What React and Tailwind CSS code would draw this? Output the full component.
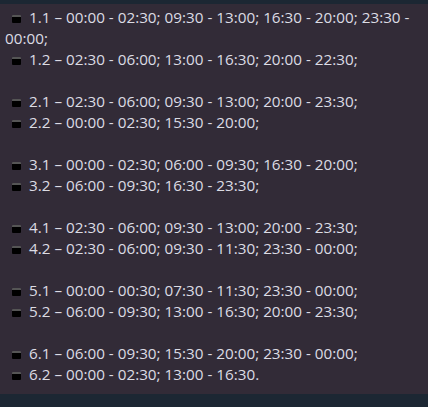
const groups = [
  ['1.1 – 00:00 - 02:30; 09:30 - 13:00; 16:30 - 20:00; 23:30 - 00:00;', '1.2 – 02:30 - 06:00; 13:00 - 16:30; 20:00 - 22:30;'],
  ['2.1 – 02:30 - 06:00; 09:30 - 13:00; 20:00 - 23:30;', '2.2 – 00:00 - 02:30; 15:30 - 20:00;'],
  ['3.1 – 00:00 - 02:30; 06:00 - 09:30; 16:30 - 20:00;', '3.2 – 06:00 - 09:30; 16:30 - 23:30;'],
  ['4.1 – 02:30 - 06:00; 09:30 - 13:00; 20:00 - 23:30;', '4.2 – 02:30 - 06:00; 09:30 - 11:30; 23:30 - 00:00;'],
  ['5.1 – 00:00 - 00:30; 07:30 - 11:30; 23:30 - 00:00;', '5.2 – 06:00 - 09:30; 13:00 - 16:30; 20:00 - 23:30;'],
  ['6.1 – 06:00 - 09:30; 15:30 - 20:00; 23:30 - 00:00;', '6.2 – 00:00 - 02:30; 13:00 - 16:30.'],
];

const Mark = () => (
  <span className="inline-block w-[9px] h-[8px] ml-[7px] mr-[8px] align-[0px] rounded-[1px] bg-black border-t-2 border-[#555]" />
);

export default function App() {
  return (
    <div className="w-[428px] h-[407px] bg-[#1c2733] flex flex-col">
      <div className="h-[4px] shrink-0" />
      <div className="bg-[#322b37] h-[390px] pl-[5px] pr-[8px] pt-[3px] text-[#dcdce4] text-[15.25px] leading-[21px] font-['Open_Sans',sans-serif]">
        {groups.map((g, i) => (
          <div key={i} className={i > 0 ? 'mt-[21px]' : ''}>
            {g.map(line => (
              <p key={line}>
                <Mark />
                {line}
              </p>
            ))}
          </div>
        ))}
      </div>
    </div>
  );
}
